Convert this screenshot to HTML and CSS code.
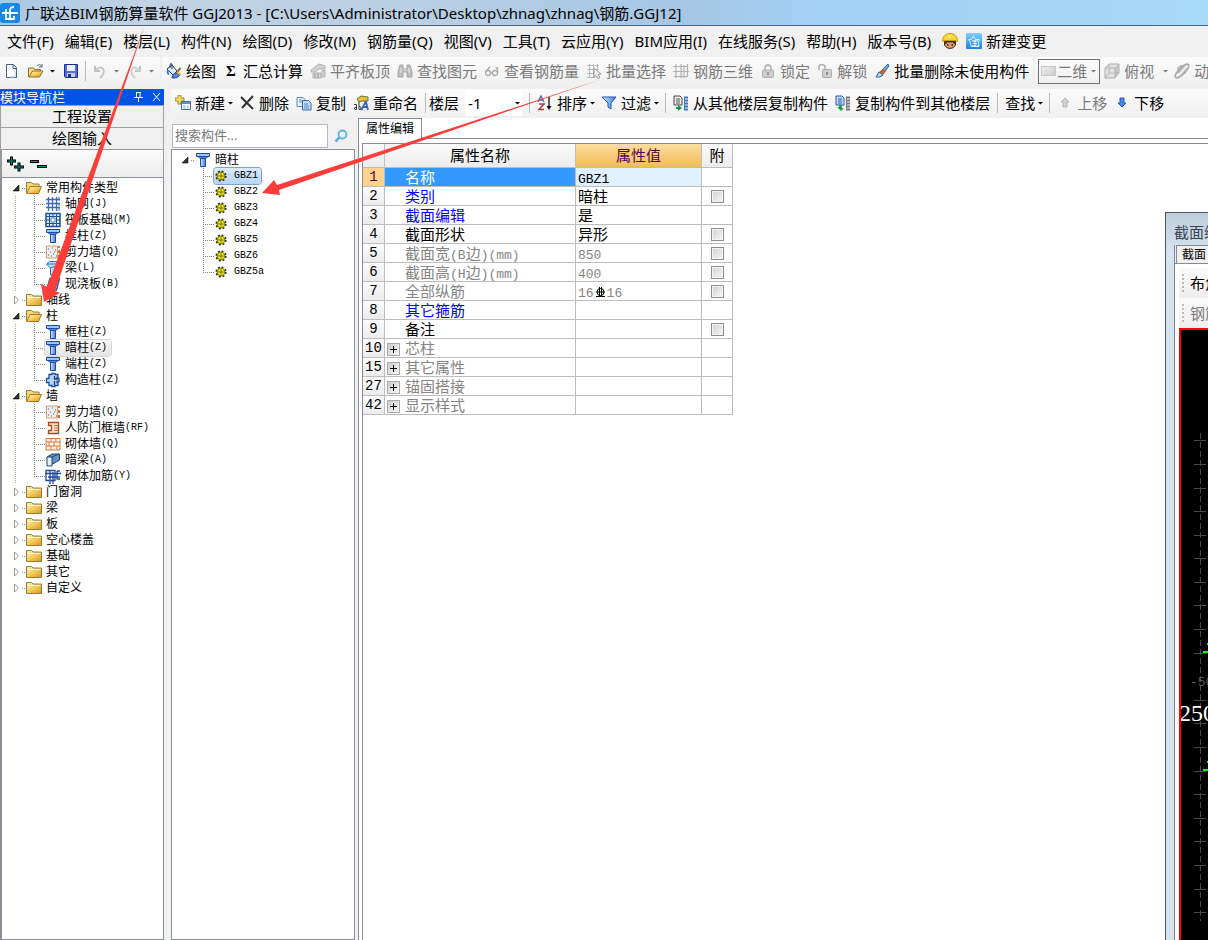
FILE: index.html
```html
<!DOCTYPE html>
<html lang="zh-CN">
<head>
<meta charset="utf-8">
<title>广联达BIM钢筋算量软件 GGJ2013</title>
<link rel="stylesheet" href="styles.css">
</head>
<body>
<svg class="defs" aria-hidden="true">
  <defs>
    <linearGradient id="gold" x1="0" y1="0" x2="1" y2="1"><stop offset="0" stop-color="#fff6b8"/><stop offset=".5" stop-color="#f4cd5c"/><stop offset="1" stop-color="#d8931c"/></linearGradient>
    <linearGradient id="blue" x1="0" y1="0" x2="1" y2="0"><stop offset="0" stop-color="#dcebff"/><stop offset="1" stop-color="#3a78e0"/></linearGradient>
    <linearGradient id="sky" x1="0" y1="0" x2="0" y2="1"><stop offset="0" stop-color="#7fd0ff"/><stop offset="1" stop-color="#1f7fdc"/></linearGradient>
    <symbol id="folder" viewBox="0 0 16 16"><path d="M.5 13.500V2.500h5l1.500 1.500h8.500v9.500z" fill="url(#gold)" stroke="#9a7b35"/><path d="M1.500 5.500h13" stroke="#fffbe0"/></symbol>
    <symbol id="open" viewBox="0 0 16 16"><path d="M.5 13V2.500h5l1.500 1.500h6v3" fill="#f4d878" stroke="#9a7b35"/><path d="M.7 13.500L4 6.500h11.500l-3 7z" fill="url(#gold)" stroke="#a87b20"/></symbol>
    <symbol id="grid" viewBox="0 0 16 16"><path d="M3.500 1v14M7.500 1v14M11.500 1v14M1 3.500h14M1 7.500h14M1 11.500h14" stroke="#3c69bc" stroke-width="1.300"/><path d="M14 1v4M14 7v3M14 12v3" stroke="#3c69bc"/></symbol>
    <symbol id="raft" viewBox="0 0 16 16"><path d="M1 1.500h14v13H1z" fill="#dceeff" stroke="#1d4f91" stroke-width="1.500"/><path d="M4.500 1v14M11.500 1v14M1 4.500h14M1 11.500h14M8 1v3M8 12v3M1 8h3M12 8h3" stroke="#1d4f91"/><path d="M6 6h4v4H6z" fill="#fff" stroke="#4a7fc0"/></symbol>
    <symbol id="column" viewBox="0 0 16 16"><path d="M1.500 1.500h13v3h-13z" fill="#9cc4fb" stroke="#1c4aa5"/><path d="M3 4.500h10L11 6.500H5z" fill="#4f86e0" stroke="#1c4aa5"/><path d="M5.500 6.500h5v8h-5z" fill="url(#blue)" stroke="#1c4aa5"/></symbol>
    <symbol id="wall" viewBox="0 0 16 16"><path d="M1.500 2h11v12h-11z" fill="#eee" stroke="#d69a73"/><path d="M3 5h1M7 4h1M10 6h1M5 8h1M3 11h1M8 10h1M11 12h1M6 12h1M9 8h1" stroke="#555"/><path d="M14 2v2M14 6v3M14 11v3" stroke="#e26b1c" stroke-width="2"/></symbol>
    <symbol id="beam" viewBox="0 0 16 16"><path d="M1.500 4l3-2.500h10v3l-3 2v6l-3 2.500h-3V8z" fill="#c8e2fb" stroke="#2371b9"/><path d="M2 4h9l3-2M5 8l6-2" fill="none" stroke="#2371b9"/></symbol>
    <symbol id="slab" viewBox="0 0 16 16"><path d="M5 2.500h9.500l-3 11.500H1.500z" fill="#e4f0ff" stroke="#285ba9" stroke-width="1.500"/></symbol>
    <symbol id="struct" viewBox="0 0 16 16"><path d="M4 2.500h3v-1h3v1h3v3h-1v1h2v3h-2v1h1v3h-3v1H7v-1H4v-3H1.500v-4H4z" fill="#b8d6fb" stroke="#20508f" stroke-width="1.300"/><path d="M9.500 4v3h3M9.500 9v4" stroke="#183c78" stroke-width="1.300" fill="none"/></symbol>
    <symbol id="frame" viewBox="0 0 16 16"><path d="M3.500 2.500h10v11h-10v-3h3v-5h-3z" fill="#ffe2c8" stroke="#a64a1a" stroke-width="1.300"/><path d="M9 5.500h4M9 8h4M9 10.500h4" stroke="#c9713b"/></symbol>
    <symbol id="brick" viewBox="0 0 16 16"><path d="M1 2.500h14v11.500H1zM1 6h14M1 10h14M6 2v4M11 2v4M4 6v4M9 6v4M6 10v4M12 10v4" fill="#fff2e6" stroke="#d57b45"/></symbol>
    <symbol id="hidbeam" viewBox="0 0 16 16"><path d="M2 5l5-3h7.500v6L6 13z" fill="#5d92c8" stroke="#1e4668"/><path d="M2 5h5v9H2z" fill="#e5f2fd" stroke="#1e4668"/><path d="M7 5l7-3" stroke="#1e4668"/></symbol>
    <symbol id="rebar" viewBox="0 0 16 16"><path d="M1 2.500h9v10H1zM0 5.500h16M5 2v14M8 4v12M12 3v8h3M3 9h12M12 3h3" fill="none" stroke="#214a9d" stroke-width="1.300"/></symbol>
    <symbol id="gear" viewBox="0 0 12 12"><circle cx="6" cy="6" r="4.800" fill="none" stroke="#332f00" stroke-width="1.600" stroke-dasharray="2 1.770"/><circle cx="6" cy="6" r="3.800" fill="#ffef00" stroke="#4b4700" stroke-width=".7"/><circle cx="6" cy="6" r="1" fill="#fff" stroke="#333" stroke-width=".8"/><path d="M6 2.500v2M6 7.500v2M2.500 6h2M7.500 6h2" stroke="#554f00" stroke-width=".7"/></symbol>
    <symbol id="file" viewBox="0 0 16 16"><path d="M2.500 1.500h7l3 3v10h-10z" fill="#fff" stroke="#456086"/><path d="M9 1.500v4h3.500" fill="#c6dced" stroke="#456086"/><path d="M11 6v8H6" stroke="#bdd0e6" fill="none"/></symbol>
    <symbol id="openarrow" viewBox="0 0 16 16"><path d="M.5 14V5h5l1 1.500h6V9" fill="#f8dd89" stroke="#94702a"/><path d="M1 14l3.500-6H15l-3.500 6z" fill="url(#gold)" stroke="#94702a"/><path d="M9 3q3-3 5 1m0-3v3h-3" fill="none" stroke="#526b84"/></symbol>
    <symbol id="save" viewBox="0 0 16 16"><path d="M1.500 1.500h13v13h-12l-1-1z" fill="#5670c9" stroke="#202c91"/><path d="M4 2h8v6H4z" fill="#eaf0ff"/><path d="M4 10h8v4H4z" fill="#c9cbd8"/><path d="M5 11h3v3H5z" fill="#26347b"/></symbol>
    <symbol id="undo" viewBox="0 0 16 16"><path d="M3 3v5h5" fill="none" stroke="#bfbfbf" stroke-width="2"/><path d="M3 8c5-7 12-2 7 5l-2 2" fill="none" stroke="#c8c8c8" stroke-width="2"/></symbol>
    <symbol id="redo" viewBox="0 0 16 16"><path d="M13 3v5H8" fill="none" stroke="#c4c4c4" stroke-width="2"/><path d="M13 8C8 1 1 6 6 13l2 2" fill="none" stroke="#d0d0d0" stroke-width="2"/></symbol>
    <symbol id="paint" viewBox="0 0 16 16"><path d="M1 6l5-4 5 6-4 4z" fill="#dbe8fb" stroke="#243f68"/><path d="M4 5V2q0-2 2-1v5" fill="none" stroke="#243f68"/><path d="M2 7q-1 4 1 4" stroke="#3977d5" stroke-width="2" fill="none"/><path d="M14.500 5l-4 5" stroke="#8c5a2a" stroke-width="2"/><path d="M6 14q2-5 5-4l3 2q-3 4-8 3z" fill="#4d86df" stroke="#254c94"/><path d="M11 9l4 3" stroke="#f1b637" stroke-width="2"/></symbol>
    <symbol id="align" viewBox="0 0 16 16"><path d="M1 7l8-6 6 2v3H9L5 9H1zM3 10h8v5H3zM12 8l3-1v7h-3z" fill="#d3d3d3" stroke="#b1b1b1"/><path d="M5 11v4M8 10v5" stroke="#999"/></symbol>
    <symbol id="find" viewBox="0 0 16 16"><path d="M3 2h3v4h4V2h3l2 7v5h-5V9H6v5H1V9z" fill="#bdbdbd" stroke="#a6a6a6"/><path d="M4 5v5M12 5v5M7 7h2" stroke="#eee"/></symbol>
    <symbol id="glasses" viewBox="0 0 16 16"><circle cx="4" cy="10" r="2.500" fill="none" stroke="#aaa" stroke-width="1.300"/><circle cx="11" cy="10" r="2.500" fill="none" stroke="#aaa" stroke-width="1.300"/><path d="M6 10h3M2 8l4-4M13.500 10V5h-2" stroke="#aaa" fill="none" stroke-width="1.300"/></symbol>
    <symbol id="batch" viewBox="0 0 16 16"><path d="M1 2.500h12M1 6.500h12M1 10.500h9M1 14.500h8M3.500 1v14M7.500 1v14M11.500 1v6" stroke="#b9b9b9"/><path d="M8 5l7 6-3 .5 2 3-2 1-2-3-2 2z" fill="#eee" stroke="#999"/></symbol>
    <symbol id="mesh" viewBox="0 0 16 16"><path d="M0 3.500h14M0 8.500h16M1 13.500h14M3 1v14M8 1v14M11 2v13M14.500 1v13" stroke="#b2b2b2" stroke-width="1.200"/></symbol>
    <symbol id="lock" viewBox="0 0 16 16"><path d="M5 7V4q3-4 6 0v3" fill="none" stroke="#b4b4b4" stroke-width="1.800"/><rect x="2.500" y="7" width="11" height="7.500" rx="1" fill="#cecece" stroke="#b0b0b0"/><path d="M8 9v3" stroke="#888" stroke-width="1.500"/></symbol>
    <symbol id="unlock" viewBox="0 0 16 16"><path d="M2 7V3q3-3 6 0v3" fill="none" stroke="#aaa" stroke-width="1.500"/><rect x="5.500" y="6.500" width="9" height="8" rx="1" fill="#d0d0d0" stroke="#aaa"/><path d="M10 9v3" stroke="#777" stroke-width="1.500"/></symbol>
    <symbol id="brush" viewBox="0 0 16 16"><path d="M14 1l1 2-6 8-3-2z" fill="#6cabed" stroke="#3268a1"/><path d="M9 6l3 2-3 4-4-3z" fill="#d45b2b"/><path d="M5 9l4 3q-3 3-7 2z" fill="#aad7ff" stroke="#326198"/></symbol>
    <symbol id="cube" viewBox="0 0 16 16"><path d="M1 5l4-4h10v9l-4 5H1z" fill="#e2e2e2" stroke="#aaa"/><path d="M11 5l4-4v9l-4 5z" fill="#c4c4c4"/><path d="M1 5h10v10M11 5l4-4M5 1v9h10M5 10l-4 5" fill="none" stroke="#b4b4b4"/></symbol>
    <symbol id="orbit" viewBox="0 0 16 16"><circle cx="8" cy="7" r="5" fill="#bbb"/><ellipse cx="8" cy="8" rx="9" ry="3" transform="rotate(-45 8 8)" fill="none" stroke="#aaa" stroke-width="1.500"/><path d="M5 12l7-8" stroke="#eee" stroke-width="2"/></symbol>
    <symbol id="new" viewBox="0 0 16 16"><path d="M6.500 6.500h9v8h-9z" fill="#fff" stroke="#45699f"/><path d="M7 7h8v2H7z" fill="#5a92dc"/><path d="M8 11h3M12 11h2M8 13h3M12 13h2" stroke="#8caed1"/><path d="M3 0h3v3h3v3H6v3H3V6H0V3h3z" fill="#f5de60" stroke="#8f7411" stroke-width=".8"/></symbol>
    <symbol id="delete" viewBox="0 0 16 16"><path d="M2 2l12 12M14 1L3 13" stroke="#333" stroke-width="2"/></symbol>
    <symbol id="copy" viewBox="0 0 16 16"><path d="M1 2.500h6l2 2v7H1z" fill="#eaf3ff" stroke="#5486c3"/><path d="M6.500 5.500h6l2.500 2.500v7H6.500z" fill="#c8dffd" stroke="#3267aa"/><path d="M3 5h3M3 7h3M8 9h4M8 11h5M8 13h5" stroke="#5184c1"/></symbol>
    <symbol id="rename" viewBox="0 0 16 16"><path d="M4 4l4-3 7 1v4H9L6 7z" fill="#e7bd3c" stroke="#6f7431"/><path d="M1 9.500h2.500v5H2q-2-2 1.500-2.500M6 7v7.500h1.500q2-2.500-1.500-3.500" fill="none" stroke="#3b3b3b"/><path d="M8.500 15l4-8h.5l2 8M10.500 12h4" fill="none" stroke="#3368be" stroke-width="1.800"/></symbol>
    <symbol id="sort" viewBox="0 0 16 16"><path d="M1 7l3-6 3 6M2 5h4" fill="none" stroke="#4660b3" stroke-width="1.300"/><path d="M2 9h5l-5 5.500h5" fill="none" stroke="#a53f3c" stroke-width="1.500"/><path d="M12 2v11" stroke="#111" stroke-width="1.300"/><path d="M9.500 11h5L12 15z" fill="#111"/></symbol>
    <symbol id="filter" viewBox="0 0 16 16"><path d="M1 2h14L10 8v6l-3-2V8z" fill="url(#blue)" stroke="#2456ad"/></symbol>
    <symbol id="copyfrom" viewBox="0 0 16 16"><path d="M1 1h6l2 2v7H1z" fill="#eee" stroke="#444"/><path d="M3 4h4M3 6h4M3 8h4" stroke="#555"/><path d="M3 12h2v-2l4 3-4 3v-2H3z" fill="#18943a"/><path d="M11 2.500h4M11 5.500h4M11 8.500h4M11 11.500h4M11 14.500h4" stroke="#3c79c3" stroke-width="2"/><path d="M11.500 3v12" stroke="#3c79c3"/></symbol>
    <symbol id="copyto" viewBox="0 0 16 16"><path d="M1 1h6l2 2v7H1z" fill="#c6dcff" stroke="#2858aa"/><path d="M3 4h4M3 6h4M3 8h4" stroke="#2858aa"/><path d="M4 10h3v3h2l-3 3-4-4h2z" fill="#25a142"/><path d="M11 2.500h4M11 5.500h4M11 8.500h4M11 11.500h4M11 14.500h4" stroke="#747982" stroke-width="2"/><path d="M11.500 3v12" stroke="#747982"/></symbol>
    <symbol id="up" viewBox="0 0 16 16"><path d="M8 3l4 4h-2v5H6V7H4z" fill="#d0d0d0" stroke="#b6b6b6"/></symbol>
    <symbol id="down" viewBox="0 0 16 16"><path d="M8 12l4-4h-2V3H6v5H4z" fill="#4c88ec" stroke="#285bb6"/></symbol>
    <symbol id="worker" viewBox="0 0 16 16"><path d="M2.500 8h11v4q-1.500 3.500-5.500 3.500t-5.500-3.500z" fill="#dba077" stroke="#4b2612"/><path d="M2 8h12v3h-2l-1-1.500H5L4 11H2z" fill="#4d2a18"/><path d="M.5 8.500C.5 3 4 .5 8 .5S15.500 3 15.500 8.500L13 7.500H3z" fill="#fbd534" stroke="#c49a12"/><path d="M7.500 2v3" stroke="#fff3a8" stroke-width="2"/><path d="M5 12h1.500M9.500 12H11" stroke="#221" stroke-width="1.500"/></symbol>
    <symbol id="change" viewBox="0 0 16 16"><rect width="16" height="16" rx="1" fill="url(#sky)"/><path d="M2.500 6.500h3L7.500 3l2 3.500h4l-1 3 .5 4h-8l-.5-4z" fill="none" stroke="#d8f1ff"/><path d="M6 8h6M9 7v6M6 13h7M7 10.500h4" fill="none" stroke="#fff"/></symbol>
    <symbol id="caret" viewBox="0 0 5 16"><path d="M0 7h5L2.500 9.500z" fill="currentColor"/></symbol>
    <symbol id="expanded" viewBox="0 0 10 16"><path d="M7 5v6H1z" fill="#333" stroke="#111" stroke-width=".6"/></symbol>
    <symbol id="collapsed" viewBox="0 0 10 16"><path d="M2.500 4v8l4-4z" fill="#fff" stroke="#999"/></symbol>
  </defs>
</svg>

<div class="app">
  <header class="titlebar">
    <svg class="logo" viewBox="0 0 20 20"><rect width="20" height="20" rx="3" fill="#1489e6"/><path d="M2 10h16M10 16V7q0-3 4-3M6 6v3M6 11v5h8v-3" fill="none" stroke="#fff" stroke-width="1.800"/></svg>
    <span>广联达BIM钢筋算量软件 GGJ2013 - [C:\Users\Administrator\Desktop\zhnag\zhnag\钢筋.GGJ12]</span>
  </header>

  <nav class="menubar">
    <button>文件(F)</button><button>编辑(E)</button><button>楼层(L)</button><button>构件(N)</button><button>绘图(D)</button><button>修改(M)</button><button>钢筋量(Q)</button><button>视图(V)</button><button>工具(T)</button><button>云应用(Y)</button><button>BIM应用(I)</button><button>在线服务(S)</button><button>帮助(H)</button><button>版本号(B)</button>
    <button aria-label="客服"><svg class="icon"><use href="#worker"/></svg></button>
    <button class="tool change"><svg class="icon"><use href="#change"/></svg>新建变更</button>
  </nav>

  <div class="toolrow">
    <div class="toolbar quick">
      <button aria-label="新建"><svg class="icon"><use href="#file"/></svg></button>
      <button class="drop" aria-label="打开"><svg class="icon"><use href="#openarrow"/></svg><svg class="caret"><use href="#caret"/></svg></button>
      <button aria-label="保存"><svg class="icon"><use href="#save"/></svg></button>
      <i class="sep"></i>
      <button class="drop off" aria-label="撤销"><svg class="icon"><use href="#undo"/></svg><svg class="caret"><use href="#caret"/></svg></button>
      <button class="drop off" aria-label="恢复"><svg class="icon"><use href="#redo"/></svg><svg class="caret"><use href="#caret"/></svg></button>
    </div>
    <div class="toolbar">
      <button class="tool"><svg class="icon"><use href="#paint"/></svg>绘图</button>
      <button class="tool"><b class="icon sigma">Σ</b>汇总计算</button>
      <button class="tool off"><svg class="icon"><use href="#align"/></svg>平齐板顶</button>
      <button class="tool off"><svg class="icon"><use href="#find"/></svg>查找图元</button>
      <button class="tool off"><svg class="icon"><use href="#glasses"/></svg>查看钢筋量</button>
      <button class="tool off"><svg class="icon"><use href="#batch"/></svg>批量选择</button>
      <button class="tool off"><svg class="icon"><use href="#mesh"/></svg>钢筋三维</button>
      <button class="tool off"><svg class="icon"><use href="#lock"/></svg>锁定</button>
      <button class="tool off"><svg class="icon"><use href="#unlock"/></svg>解锁</button>
      <button class="tool"><svg class="icon"><use href="#brush"/></svg>批量删除未使用构件</button>
    </div>
    <div class="toolbar view">
      <div class="viewmode off"><i class="swatch"></i><select aria-label="视图模式" disabled><option>二维</option></select><svg class="caret"><use href="#caret"/></svg></div>
      <button class="tool off"><svg class="icon"><use href="#cube"/></svg>俯视<svg class="caret far"><use href="#caret"/></svg></button>
      <button class="tool off"><svg class="icon"><use href="#orbit"/></svg>动态观察</button>
    </div>
  </div>

  <div class="body">
    <aside class="sidebar">
      <h2 class="dock"><span>模块导航栏</span>
        <button aria-label="固定"><svg viewBox="0 0 9 10"><path d="M2.500 0v5M6 0v5M2 .5h5M0 5.500h9M4.500 6v4" stroke="#fff" fill="none"/></svg></button>
        <button aria-label="关闭"><svg viewBox="0 0 9 10"><path d="M1 1l7 8M8 1L1 9" stroke="#fff"/></svg></button>
      </h2>
      <button class="section">工程设置</button>
      <button class="section">绘图输入</button>
      <div class="treetools">
        <button aria-label="全部展开"><svg viewBox="0 0 18 18"><path d="M0 6h9M4.500 1.500v9M7 12h10M12 7.500v9" stroke="#000" stroke-width="3"/><path d="M1 6h7M4.500 2.500v7M8 12h8M12 8.500v7" stroke="#0b8a80"/></svg></button>
        <button aria-label="全部折叠"><svg viewBox="0 0 18 18"><path d="M0 6.500h9M7 11.500h10" stroke="#000" stroke-width="3"/><path d="M1 6.500h7M8 11.500h8" stroke="#0b8a80"/></svg></button>
      </div>
      <ul class="tree">
        <li><svg class="toggle"><use href="#expanded"/></svg><i class="stub"></i><span class="node"><svg class="icon"><use href="#open"/></svg>常用构件类型</span>
          <ul>
            <li><i class="branch"></i><span class="node"><svg class="icon"><use href="#grid"/></svg>轴网<tt>(J)</tt></span></li>
            <li><i class="branch"></i><span class="node"><svg class="icon"><use href="#raft"/></svg>筏板基础<tt>(M)</tt></span></li>
            <li><i class="branch"></i><span class="node"><svg class="icon"><use href="#column"/></svg>框柱<tt>(Z)</tt></span></li>
            <li><i class="branch"></i><span class="node"><svg class="icon"><use href="#wall"/></svg>剪力墙<tt>(Q)</tt></span></li>
            <li><i class="branch"></i><span class="node"><svg class="icon"><use href="#beam"/></svg>梁<tt>(L)</tt></span></li>
            <li><i class="branch"></i><span class="node"><svg class="icon"><use href="#slab"/></svg>现浇板<tt>(B)</tt></span></li>
          </ul>
        </li>
        <li><svg class="toggle"><use href="#collapsed"/></svg><i class="stub"></i><span class="node"><svg class="icon"><use href="#folder"/></svg>轴线</span></li>
        <li><svg class="toggle"><use href="#expanded"/></svg><i class="stub"></i><span class="node"><svg class="icon"><use href="#open"/></svg>柱</span>
          <ul>
            <li><i class="branch"></i><span class="node"><svg class="icon"><use href="#column"/></svg>框柱<tt>(Z)</tt></span></li>
            <li><i class="branch"></i><span class="node current"><svg class="icon"><use href="#column"/></svg>暗柱<tt>(Z)</tt></span></li>
            <li><i class="branch"></i><span class="node"><svg class="icon"><use href="#column"/></svg>端柱<tt>(Z)</tt></span></li>
            <li><i class="branch"></i><span class="node"><svg class="icon"><use href="#struct"/></svg>构造柱<tt>(Z)</tt></span></li>
          </ul>
        </li>
        <li><svg class="toggle"><use href="#expanded"/></svg><i class="stub"></i><span class="node"><svg class="icon"><use href="#open"/></svg>墙</span>
          <ul>
            <li><i class="branch"></i><span class="node"><svg class="icon"><use href="#wall"/></svg>剪力墙<tt>(Q)</tt></span></li>
            <li><i class="branch"></i><span class="node"><svg class="icon"><use href="#frame"/></svg>人防门框墙<tt>(RF)</tt></span></li>
            <li><i class="branch"></i><span class="node"><svg class="icon"><use href="#brick"/></svg>砌体墙<tt>(Q)</tt></span></li>
            <li><i class="branch"></i><span class="node"><svg class="icon"><use href="#hidbeam"/></svg>暗梁<tt>(A)</tt></span></li>
            <li><i class="branch"></i><span class="node"><svg class="icon"><use href="#rebar"/></svg>砌体加筋<tt>(Y)</tt></span></li>
          </ul>
        </li>
        <li><svg class="toggle"><use href="#collapsed"/></svg><i class="stub"></i><span class="node"><svg class="icon"><use href="#folder"/></svg>门窗洞</span></li>
        <li><svg class="toggle"><use href="#collapsed"/></svg><i class="stub"></i><span class="node"><svg class="icon"><use href="#folder"/></svg>梁</span></li>
        <li><svg class="toggle"><use href="#collapsed"/></svg><i class="stub"></i><span class="node"><svg class="icon"><use href="#folder"/></svg>板</span></li>
        <li><svg class="toggle"><use href="#collapsed"/></svg><i class="stub"></i><span class="node"><svg class="icon"><use href="#folder"/></svg>空心楼盖</span></li>
        <li><svg class="toggle"><use href="#collapsed"/></svg><i class="stub"></i><span class="node"><svg class="icon"><use href="#folder"/></svg>基础</span></li>
        <li><svg class="toggle"><use href="#collapsed"/></svg><i class="stub"></i><span class="node"><svg class="icon"><use href="#folder"/></svg>其它</span></li>
        <li><svg class="toggle"><use href="#collapsed"/></svg><i class="stub"></i><span class="node"><svg class="icon"><use href="#folder"/></svg>自定义</span></li>
      </ul>
    </aside>

    <main class="work">
      <div class="toolbar members">
        <button class="tool"><svg class="icon"><use href="#new"/></svg>新建<svg class="caret"><use href="#caret"/></svg></button>
        <button class="tool"><svg class="icon"><use href="#delete"/></svg>删除</button>
        <button class="tool"><svg class="icon"><use href="#copy"/></svg>复制</button>
        <button class="tool"><svg class="icon"><use href="#rename"/></svg>重命名</button>
        <i class="sep"></i>
        <label class="floor">楼层<span class="combo"><select><option>-1</option></select><svg class="caret"><use href="#caret"/></svg></span></label>
        <i class="sep"></i>
        <button class="tool"><svg class="icon"><use href="#sort"/></svg>排序<svg class="caret"><use href="#caret"/></svg></button>
        <button class="tool"><svg class="icon"><use href="#filter"/></svg>过滤<svg class="caret"><use href="#caret"/></svg></button>
        <i class="sep"></i>
        <button class="tool"><svg class="icon"><use href="#copyfrom"/></svg>从其他楼层复制构件</button>
        <button class="tool"><svg class="icon"><use href="#copyto"/></svg>复制构件到其他楼层</button>
        <i class="sep"></i>
        <button class="tool">查找<svg class="caret"><use href="#caret"/></svg></button>
        <i class="sep"></i>
        <button class="tool off"><svg class="icon"><use href="#up"/></svg>上移</button>
        <button class="tool"><svg class="icon"><use href="#down"/></svg>下移</button>
      </div>

      <div class="panes">
        <section class="list">
          <form class="search"><input type="text" placeholder="搜索构件..." aria-label="搜索构件"><button type="button" aria-label="搜索"><svg viewBox="0 0 14 14"><circle cx="8.500" cy="5.500" r="4" fill="#e5f4ff" stroke="#65aee0" stroke-width="1.800"/><path d="M5.500 8.500l-4 4" stroke="#65aee0" stroke-width="2.500"/></svg></button></form>
          <ul class="tree members-tree">
            <li><svg class="toggle"><use href="#expanded"/></svg><i class="stub"></i><span class="node"><svg class="icon"><use href="#column"/></svg>暗柱</span>
              <ul>
                <li><i class="branch"></i><span class="node chosen"><svg class="gear"><use href="#gear"/></svg><tt>GBZ1</tt></span></li>
                <li><i class="branch"></i><span class="node"><svg class="gear"><use href="#gear"/></svg><tt>GBZ2</tt></span></li>
                <li><i class="branch"></i><span class="node"><svg class="gear"><use href="#gear"/></svg><tt>GBZ3</tt></span></li>
                <li><i class="branch"></i><span class="node"><svg class="gear"><use href="#gear"/></svg><tt>GBZ4</tt></span></li>
                <li><i class="branch"></i><span class="node"><svg class="gear"><use href="#gear"/></svg><tt>GBZ5</tt></span></li>
                <li><i class="branch"></i><span class="node"><svg class="gear"><use href="#gear"/></svg><tt>GBZ6</tt></span></li>
                <li><i class="branch"></i><span class="node"><svg class="gear"><use href="#gear"/></svg><tt>GBZ5a</tt></span></li>
              </ul>
            </li>
          </ul>
        </section>

        <section class="props">
          <div class="tabs"><button class="tab">属性编辑</button></div>
          <div class="sheet">
            <table>
              <colgroup><col class="c-num"><col class="c-name"><col class="c-val"><col class="c-add"></colgroup>
              <thead><tr><th></th><th>属性名称</th><th class="hot">属性值</th><th>附</th></tr></thead>
              <tbody>
                <tr class="active"><th>1</th><td>名称</td><td><tt>GBZ1</tt></td><td></td></tr>
                <tr class="link"><th>2</th><td>类别</td><td>暗柱</td><td><input type="checkbox" aria-label="类别 附加"></td></tr>
                <tr class="link"><th>3</th><td>截面编辑</td><td>是</td><td></td></tr>
                <tr><th>4</th><td>截面形状</td><td>异形</td><td><input type="checkbox" aria-label="截面形状 附加"></td></tr>
                <tr class="dim"><th>5</th><td>截面宽<tt>(B</tt>边<tt>)(mm)</tt></td><td><tt>850</tt></td><td><input type="checkbox" aria-label="截面宽 附加"></td></tr>
                <tr class="dim"><th>6</th><td>截面高<tt>(H</tt>边<tt>)(mm)</tt></td><td><tt>400</tt></td><td><input type="checkbox" aria-label="截面高 附加"></td></tr>
                <tr class="dim"><th>7</th><td>全部纵筋</td><td><tt>16</tt><svg class="grade" viewBox="0 0 13 12"><circle cx="6.500" cy="6" r="3.500" fill="none" stroke="#000"/><path d="M5.500 1v10M7.500 1v10M2 10.500h9M2 6h9" stroke="#000"/></svg><tt>16</tt></td><td><input type="checkbox" aria-label="全部纵筋 附加"></td></tr>
                <tr class="link"><th>8</th><td>其它箍筋</td><td></td><td></td></tr>
                <tr><th>9</th><td>备注</td><td></td><td><input type="checkbox" aria-label="备注 附加"></td></tr>
                <tr class="dim group"><th>10</th><td><button aria-label="展开"></button>芯柱</td><td></td><td></td></tr>
                <tr class="dim group"><th>15</th><td><button aria-label="展开"></button>其它属性</td><td></td><td></td></tr>
                <tr class="dim group"><th>27</th><td><button aria-label="展开"></button>锚固搭接</td><td></td><td></td></tr>
                <tr class="dim group"><th>42</th><td><button aria-label="展开"></button>显示样式</td><td></td><td></td></tr>
              </tbody>
            </table>
          </div>
        </section>
      </div>
    </main>
  </div>

  <section class="window">
    <h2>截面编辑</h2>
    <div class="inner">
      <div class="wtabs"><button>截面</button></div>
      <div class="wbody">
        <div class="wtool"><i class="grip"></i><button>布角筋</button></div>
        <div class="wtool off"><i class="grip"></i><button>钢筋</button></div>
        <div class="canvas">
          <svg width="28" height="609">
            <path d="M19.500 103v488" stroke="#484848" stroke-dasharray="6 3"/>
            <path d="M13 110.500h12M13 134.500h12M13 158.500h12M13 181.500h12M13 205.500h12M13 228.500h12M13 252.500h12M13 275.500h12M13 299.500h12M13 323.500h12M13 370.500h12M13 393.500h12M13 417.500h12M13 441.500h12M13 464.500h12M13 488.500h12M13 511.500h12M13 535.500h12M13 559.500h12M13 582.500h12" stroke="#484848"/>
            <path d="M22 322h6M22 440h6M27 313v2M27 431v2" stroke="#0f0" stroke-width="2"/>
            <text class="axis" x="9" y="356">-500</text>
            <text class="dimtext" x="-2" y="391">250</text>
          </svg>
        </div>
      </div>
    </div>
  </section>

  <svg class="marks" viewBox="0 0 620 310" width="620" height="310" aria-hidden="true">
    <path d="M145 25L55 291l5 2-16 9-3-18 6 3z" fill="#fc3d3a"/>
    <path d="M602 79L279 190l1 5-18-2 12-13 3 5z" fill="#fc3d3a"/>
  </svg>
</div>
</body>
</html>
```

FILE: styles.css
```css
* { box-sizing: border-box; }
body {
  margin: 0;
  overflow: hidden;
  font: 15px/20px "Noto Sans", "Noto Sans CJK SC", sans-serif;
  color: #000;
  background: #f0f0f0;
}
button, select, input { font: inherit; color: inherit; }
button { display: inline-flex; align-items: center; padding: 0; border: 0; background: none; white-space: nowrap; flex: none; }
svg { flex: none; }
ul { list-style: none; margin: 0; padding: 0; }
h2 { margin: 0; font-weight: normal; font-size: 15px; }
tt { font-family: "Liberation Mono", monospace; line-height: 1; }
.defs { position: absolute; width: 0; height: 0; }
.icon { width: 16px; height: 16px; }
.caret { width: 5px; height: 16px; }
.off { color: #7a7a7a; }

.app { position: relative; display: flex; flex-direction: column; height: 100vh; overflow: hidden; }

.titlebar {
  display: flex; align-items: center; gap: 5px; flex: none;
  height: 26px;
  border-bottom: 1px solid #4f6275;
  background: linear-gradient(90deg, #a9c8e4, #c1d3e4 12%, #b9cfe3 35%, #a5c6e4 57%, #a2cff3 66%, #a8d8fa);
  white-space: nowrap;
}
.logo { width: 20px; height: 20px; }

.menubar { display: flex; align-items: center; gap: 11px; flex: none; height: 31px; padding: 0 0 2px 7px; background: #f0f0f0; }
.menubar button { gap: 4px; }
.menubar .change { margin-left: -3px; }

.toolrow { display: flex; gap: 2px; flex: none; height: 28px; }
.toolbar {
  display: flex; align-items: center; gap: 7px;
  padding: 0 4px;
  border-radius: 3px;
  background: linear-gradient(#fbfbfb, #f0f0f0);
}
.toolbar.quick { gap: 8px; width: 160px; flex: none; }
.quick .drop { gap: 6px; }
.tool { gap: 4px; }
.tool .caret { margin: 0 -1px; }
.tool .far { margin-left: 5px; }
.sep { width: 1px; height: 20px; background: #b9b9b9; flex: none; }
.quick .sep { margin: 0 -2px; }
.sigma { font: bold 15px/16px "Liberation Serif", serif; text-align: center; }
.toolbar.view { flex: 1; gap: 4px; padding-left: 3px; overflow: hidden; white-space: nowrap; }
.viewmode { display: flex; align-items: center; gap: 1px; flex: none; height: 25px; width: 62px; padding: 0 3px 0 2px; border: 1px solid #707070; }
.swatch { width: 15px; height: 10px; flex: none; background: linear-gradient(135deg, #eee, #ccc); border: 1px solid #c8c8c8; }
select { appearance: none; border: 0; padding: 0; background: none; opacity: 1; }
.viewmode select { flex: 1; min-width: 0; }
.view .tool:last-child { margin-left: 3px; }

.body { display: flex; flex: 1; min-height: 0; padding-top: 4px; }

.sidebar { display: flex; flex-direction: column; width: 165px; flex: none; padding-right: 1px; }
.dock { display: flex; align-items: center; gap: 9px; height: 16px; padding-right: 3px; color: #fff; background: #0054e3; font-size: 13px; line-height: 16px; }
.dock span { flex: 1; }
.dock svg { width: 9px; height: 10px; }
.section { justify-content: center; height: 22px; padding-bottom: 1px; border: 1px solid #a0a0a0; border-bottom-width: 0; background: #f0f0f0; line-height: 20px; }
.treetools { display: flex; gap: 5px; align-items: center; height: 28px; padding-left: 5px; border: 1px solid #999; border-width: 1px 1px 0 2px; background: linear-gradient(#fbfbfb, #ececec); }
.treetools svg { width: 18px; height: 18px; }

.tree { flex: 1; padding-top: 2px; background: #fff; border: 1px solid #8a8f99; border-left: 2px solid #8a8f99; font-size: 12px; line-height: 16px; overflow: hidden; }
.tree li { display: flex; flex-wrap: wrap; align-items: center; padding-left: 10px; }
.tree ul { width: 100%; padding-left: 3px; }
.tree ul li { padding-left: 19px; background: repeating-linear-gradient(#aaa 0 1px, transparent 1px 2px) 0 0 / 1px 100% no-repeat; }
.tree tt { font-size: 10px; }
.toggle { width: 10px; height: 16px; }
.stub { width: 4px; height: 1px; background: repeating-linear-gradient(90deg, #888 0 1px, transparent 1px 2px); }
.branch {
  width: 11px; height: 16px;
  background:
    repeating-linear-gradient(#888 0 1px, transparent 1px 2px) 0 0 / 1px 100% no-repeat,
    repeating-linear-gradient(90deg, #888 0 1px, transparent 1px 2px) 0 8px / 100% 1px no-repeat;
}
li:last-child > .branch { background-size: 1px 8px, 100% 1px; }
.node { display: flex; align-items: center; height: 16px; white-space: nowrap; }
.node .icon { margin-right: 4px; }
.current { border-radius: 3px; padding-right: 4px; background: linear-gradient(#f8f8f8, #e4e4e4); box-shadow: 0 0 0 1px #d6d6d6; }

.work { flex: 1; min-width: 0; display: flex; flex-direction: column; margin-left: 6px; }
.toolbar.members { flex: none; height: 29px; padding-bottom: 1px; overflow: hidden; white-space: nowrap; }
.floor { display: flex; align-items: center; gap: 6px; margin-left: -4px; }
.combo { display: flex; align-items: center; width: 57px; height: 26px; padding: 0 2px 0 3px; background: #fff; }
.combo select { flex: 1; min-width: 0; }

.panes { flex: 1; display: flex; min-height: 0; }
.list { display: flex; flex-direction: column; width: 184px; flex: none; }
.search { display: flex; align-items: center; height: 31px; padding: 6px 7px 1px 1px; gap: 6px; }
.search input { flex: 1; min-width: 0; height: 24px; padding: 0 2px 3px; border: 1px solid #b5b8be; background: #fff; font-size: 13px; }
.search input::placeholder { color: #777; opacity: 1; }
.search svg { width: 14px; height: 14px; }
.members-tree { border-left-width: 1px; }
.members-tree > li { padding-left: 9px; }
.members-tree ul li { padding-left: 19px; background: none; }
.gear { width: 12px; height: 12px; margin-right: 7px; }
.members-tree ul .node { padding: 0 3px 0 1px; }
.members-tree .chosen { border-radius: 3px; background: linear-gradient(#dcebfc, #b5d3f7); box-shadow: 0 0 0 1px #7da2ce; }

.props { flex: 1; display: flex; flex-direction: column; margin-left: 3px; border-left: 1px solid #8a8a96; background: #fff; min-width: 0; }
.tabs { display: flex; height: 21px; border-bottom: 1px solid #8a8a96; }
.tab { height: 21px; padding: 0 7px; border: 1px solid #8a8a96; border-width: 1px 1px 0 0; background: #fff; font-size: 12px; }
.sheet { flex: 1; margin: 4px 0 0 3px; border: 1px solid #8a8a96; border-width: 1px 0 0 1px; }
table { table-layout: fixed; width: 370px; border-collapse: separate; border-spacing: 0; line-height: 16px; }
.c-num { width: 22px; } .c-name { width: 191px; } .c-val { width: 126px; } .c-add { width: 31px; }
th, td { height: 19px; padding: 0; border: 1px solid #bdbdbd; border-width: 0 1px 1px 0; font-weight: normal; white-space: nowrap; overflow: hidden; }
th { text-align: center; background: linear-gradient(#fbfbfb, #ececec); }
thead th { height: 24px; padding-bottom: 2px; }
thead .hot { color: #5c0050; background: linear-gradient(#fbdd9e, #f2bd58); }
tbody th { font: 14px/18px "Liberation Mono", monospace; }
td { padding-left: 2px; }
td:nth-child(2) { padding-left: 20px; }
td:nth-child(4) { padding: 0; text-align: center; }
table tt { font-size: 13px; }
.link td:nth-child(2) { color: #00f; }
.dim td { color: #848484; }
.active th { background: #ffd48a; color: #5c0050; }
.active td:nth-child(2) { background: #3399ff; color: #fff; }
.active td:nth-child(3) { background: #e1f0ff; }
td input { appearance: none; display: block; width: 13px; height: 13px; margin: 0 auto; border: 1px solid #8e8f8f; background: linear-gradient(135deg, #cfd3d8, #f6f6f6); box-shadow: inset 0 0 0 1px #f4f4f4; }
.group td:nth-child(2) { padding-left: 2px; }
.group button { width: 13px; height: 13px; margin-right: 5px; vertical-align: -1px; border: 1px solid #aaa; background: linear-gradient(#000, #000) 2px 5px / 7px 1px no-repeat, linear-gradient(#000, #000) 5px 2px / 1px 7px no-repeat, linear-gradient(135deg, #ccc, #f8f8f8); }
.grade { width: 13px; height: 12px; vertical-align: -1px; }

.window { position: absolute; top: 212px; right: 0; bottom: 0; width: 43px; display: flex; flex-direction: column; padding-left: 8px; overflow: hidden; border: 1px solid #555; border-width: 1px 0 0 1px; background: linear-gradient(#bccddd, #d6e3f1 40px); }
.window h2 { height: 32px; padding-top: 9px; color: #3c4650; white-space: nowrap; }
.inner { flex: 1; display: flex; flex-direction: column; border-left: 1px solid #7c8696; background: #fff; }
.wtabs { display: flex; height: 19px; background: #f0f0f0; border-bottom: 1px solid #8a8a96; }
.wtabs button { margin-left: 1px; padding: 0 5px; border: 1px solid #8a8a96; border-bottom: 0; font-size: 12px; }
.wbody { display: flex; flex-direction: column; padding: 4px 0 0 4px; flex: 1; }
.wtool { display: flex; align-items: center; gap: 6px; height: 30px; padding-left: 3px; background: linear-gradient(#fafafa, #eee); }
.grip { width: 2px; height: 18px; flex: none; background: repeating-linear-gradient(#bbb 0 2px, transparent 2px 4px); }
.canvas { flex: 1; border: 2px solid #f00; border-width: 2px 0 0 2px; background: #000; overflow: hidden; }
.canvas svg { display: block; }
.axis { font: 13px "Liberation Mono", monospace; fill: #5a5a5a; }
.dimtext { font: 24px "Liberation Serif", serif; fill: #fff; }

.marks { position: absolute; left: 0; top: 0; pointer-events: none; }
```
